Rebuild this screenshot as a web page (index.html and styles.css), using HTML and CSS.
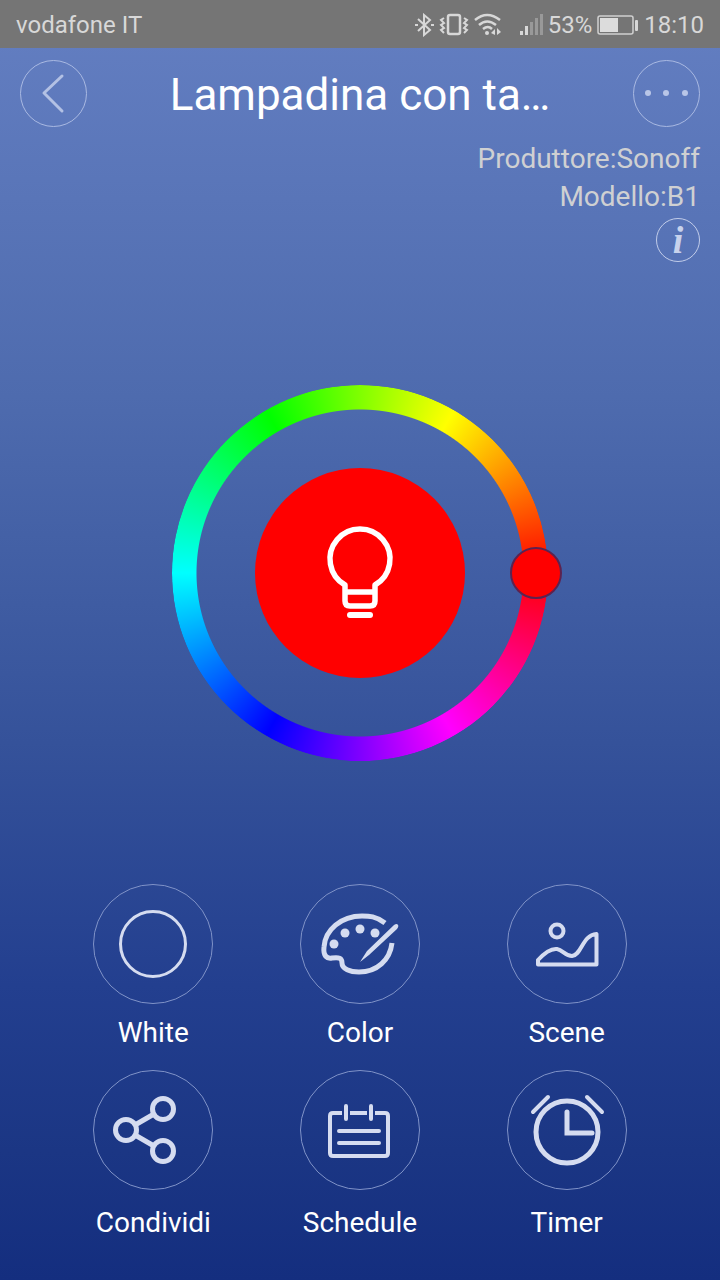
FILE: index.html
```html
<!DOCTYPE html>
<html lang="it">
<head>
  <meta charset="UTF-8" />
  <meta name="viewport" content="width=device-width, initial-scale=1.0" />
  <title>Lampadina</title>
  <link rel="stylesheet" href="styles.css">
</head>
<body>
  <div class="status">
    <span class="carrier">vodafone IT</span>
    <svg width="20" height="24" viewBox="0 0 20 24" fill="none" stroke="#d8d8d8" stroke-width="2">
      <path d="M4 6l12 11-6 5V2l6 5L4 18"/>
      <path d="M1 12h3M17 12h3"/>
    </svg>
    <svg width="30" height="24" viewBox="0 0 30 24" fill="none" stroke="#d8d8d8" stroke-width="2">
      <rect x="9" y="2" width="12" height="19" rx="2" stroke-width="2.500"/>
      <path d="M5 5L2 7l3 3-3 2 3 3-3 2 3 3M25 5l3 2-3 3 3 2-3 3 3 2-3 3"/>
    </svg>
    <svg width="28" height="24" viewBox="0 0 28 24" fill="none" stroke="#d8d8d8" stroke-width="2.500">
      <path d="M1 7q12-10 25 0M5 12q8-7 17 0M9 16q5-4 9 0"/>
      <circle cx="13" cy="20" r="2" fill="#d8d8d8" stroke="none"/>
      <path d="M17 20l4-4v6M23 15v7l4-3z" stroke="none" fill="#d8d8d8"/>
    </svg>
    <svg class="signal" width="24" height="24" viewBox="0 0 24 24">
      <g fill="#d8d8d8">
        <rect x="1" y="18" width="3" height="4"/>
        <rect x="6" y="13" width="3" height="9"/>
      </g>
      <g fill="#999">
        <rect x="11" y="9" width="3" height="13"/>
        <rect x="16" y="5" width="3" height="17"/>
        <rect x="21" y="1" width="3" height="21"/>
      </g>
    </svg>
    <span>53%</span>
    <svg width="42" height="24" viewBox="0 0 42 24">
      <rect x="1" y="3" width="35" height="18" rx="2" fill="none" stroke="#d0d0d0" stroke-width="1.500"/>
      <rect x="3" y="5" width="18" height="14" fill="#dcdcdc"/>
      <rect x="38" y="7" width="3" height="11" rx="1" fill="#d8d8d8"/>
    </svg>
    <span>18:10</span>
  </div>

  <header class="topbar">
    <button class="round" aria-label="Indietro">
      <svg width="65" height="65" viewBox="0 0 65 65" fill="none" stroke="#b3c1e4" stroke-width="3" stroke-linecap="round" stroke-linejoin="round">
        <path d="M41 15L23 32l18 18"/>
      </svg>
    </button>
    <h1>Lampadina con ta…</h1>
    <button class="round" aria-label="Menu">
      <svg width="65" height="65" viewBox="0 0 65 65" fill="#b9c6e7">
        <circle cx="14" cy="32" r="3"/><circle cx="32" cy="32" r="3"/><circle cx="51" cy="32" r="3"/>
      </svg>
    </button>
  </header>

  <section class="info">
    <p>Produttore:Sonoff</p>
    <p>Modello:B1</p>
    <button class="info-btn" aria-label="Informazioni">i</button>
  </section>

  <main>
    <div class="wheel">
      <div class="ring"></div>
      <button class="power" aria-label="Accendi">
        <svg width="72" height="96" viewBox="0 0 72 96" fill="none" stroke="#fff" stroke-width="5.500" stroke-linejoin="round">
          <path d="M21 60A30 30 0 1 1 51 60V76Q51 81 46 81H26Q21 81 21 76ZM21 67H51"/>
          <path d="M26 90H46" stroke-width="6" stroke-linecap="round"/>
        </svg>
      </button>
      <span class="knob"></span>
    </div>
  </main>

  <nav class="pad">
    <button class="item">
      <svg width="120" height="120" viewBox="0 0 120 120">
        <circle class="rim" cx="60" cy="60" r="59.500"/>
        <circle cx="60" cy="60" r="32.500" stroke-width="3"/>
      </svg>
      White
    </button>
    <button class="item">
      <svg width="120" height="120" viewBox="0 0 120 120">
        <circle class="rim" cx="60" cy="60" r="59.500"/>
        <path stroke-width="5" d="M85 39C76 32 69 32 62 32C41 32 25 46 24 63C23 72 27 75 32 74C39 73 42 74 42 79C42 85 50 88 59 88C77 88 90 76 92 59"/>
        <g fill="#d5dcf0" stroke="none">
          <circle cx="34" cy="60" r="4.500"/><circle cx="45" cy="49" r="4.500"/>
          <circle cx="60" cy="45" r="4.500"/><circle cx="75" cy="49" r="4.500"/>
          <path d="M60 78L67 67L94 41Q97 39 98 41Q99 42 97 45L69 71Z"/>
        </g>
      </svg>
      Color
    </button>
    <button class="item">
      <svg width="120" height="120" viewBox="0 0 120 120">
        <circle class="rim" cx="60" cy="60" r="59.500"/>
        <circle cx="50" cy="47" r="6.500" stroke-width="4"/>
        <path stroke-width="4" stroke-linejoin="round" d="M31 80.500V76Q42 64 50 65C56 66 58 72 65 72C75 71 75 51 89.500 50V80.500Z"/>
      </svg>
      Scene
    </button>
    <button class="item low">
      <svg width="120" height="120" viewBox="0 0 120 120">
        <circle class="rim" cx="60" cy="60" r="59.500"/>
        <g stroke-width="5">
          <circle cx="33" cy="60" r="10.500"/><circle cx="70" cy="39" r="10.500"/><circle cx="70" cy="81" r="10.500"/>
          <path d="M42 55L61 44M42 65L61 76"/>
        </g>
      </svg>
      Condividi
    </button>
    <button class="item low">
      <svg width="120" height="120" viewBox="0 0 120 120">
        <circle class="rim" cx="60" cy="60" r="59.500"/>
        <g stroke-width="4">
          <path d="M42 43H33Q30 43 30 46V83Q30 86 33 86H85Q88 86 88 83V46Q88 43 85 43H75M50 43H67"/>
          <path stroke-linecap="round" d="M46 36V49M71 36V49M39 61H79M39 73H79"/>
        </g>
      </svg>
      Schedule
    </button>
    <button class="item low">
      <svg width="120" height="120" viewBox="0 0 120 120">
        <circle class="rim" cx="60" cy="60" r="59.500"/>
        <g stroke-width="4" stroke-linecap="round">
          <circle cx="60" cy="62" r="31" stroke-width="5"/>
          <path d="M60 42V63H85" stroke-width="5"/>
          <path d="M26 42L41 27M80 27L95 42"/>
        </g>
      </svg>
      Timer
    </button>
  </nav>
</body>
</html>
```
FILE: styles.css
```css
* { box-sizing: border-box; }

body {
  margin: 0;
  min-height: 100vh;
  display: flex;
  flex-direction: column;
  font-family: Roboto, sans-serif;
  color: #fff;
  background: linear-gradient(#647fc2 0%, #4e6bae 31%, #35529a 58%, #233f8f 77%, #1b3684 90%, #142e7f 100%);
}

button {
  padding: 0;
  border: none;
  background: none;
  color: inherit;
  font-family: inherit;
  cursor: pointer;
}
svg { display: block; }

.status {
  display: flex;
  align-items: center;
  gap: 5px;
  height: 48px;
  padding: 2px 16px 0;
  font-size: 24px;
  color: #d8d8d8;
  background: #757575;
}
.carrier { margin-right: auto; }
.signal  { margin-left: 12px; }

.topbar {
  display: flex;
  align-items: center;
  justify-content: space-between;
  padding: 12px 20px 0;
}
.topbar h1 { margin: 0; padding-top: 3px; font-size: 44px; line-height: 64px; font-weight: 400; }
.round {
  width: 67px;
  height: 67px;
  border: 1px solid #a9b9e2;
  border-radius: 50%;
}

.info {
  display: flex;
  flex-direction: column;
  align-items: flex-end;
  padding: 13px 20px 0;
  font-size: 28px;
  line-height: 38px;
  color: #cfd0d2;
}
.info p { margin: 0; }
.info-btn {
  width: 44px;
  height: 44px;
  margin-top: 2px;
  border: 1px solid #c2cdea;
  border-radius: 50%;
  font: italic bold 38px/40px "Liberation Serif", serif;
  color: #c8d2ec;
}

main {
  flex: 1;
  display: flex;
  align-items: center;
  justify-content: center;
}
.wheel {
  position: relative;
  display: grid;
  place-items: center;
  width: 376px;
  height: 376px;
}
.ring, .power { grid-area: 1 / 1; }
.ring {
  width: 100%;
  height: 100%;
  border-radius: 50%;
  background: conic-gradient(from 90deg, #f00, #f0f, #00f, #0ff, #0f0, #ff0, #f00);
  mask: radial-gradient(circle, transparent 163px, #000 164px);
}
.power {
  display: grid;
  place-items: center;
  width: 210px;
  height: 210px;
  border-radius: 50%;
  background: #f00;
}
.knob {
  position: absolute;
  top: 50%;
  left: calc(100% - 12px);
  width: 52px;
  height: 52px;
  border: 2px solid #5c2350;
  border-radius: 50%;
  background: #f00;
  transform: translate(-50%, -50%);
}

.pad {
  display: grid;
  grid-template-columns: repeat(3, 1fr);
  row-gap: 21px;
  padding: 0 50px 41px;
}
.item {
  display: flex;
  flex-direction: column;
  align-items: center;
  gap: 13px;
  font-size: 28px;
  line-height: 32px;
}
.item.low { gap: 17px; }
.item svg { fill: none; stroke: #d5dcf0; }
.item .rim { stroke: #8093c8; stroke-width: 1; }
```
